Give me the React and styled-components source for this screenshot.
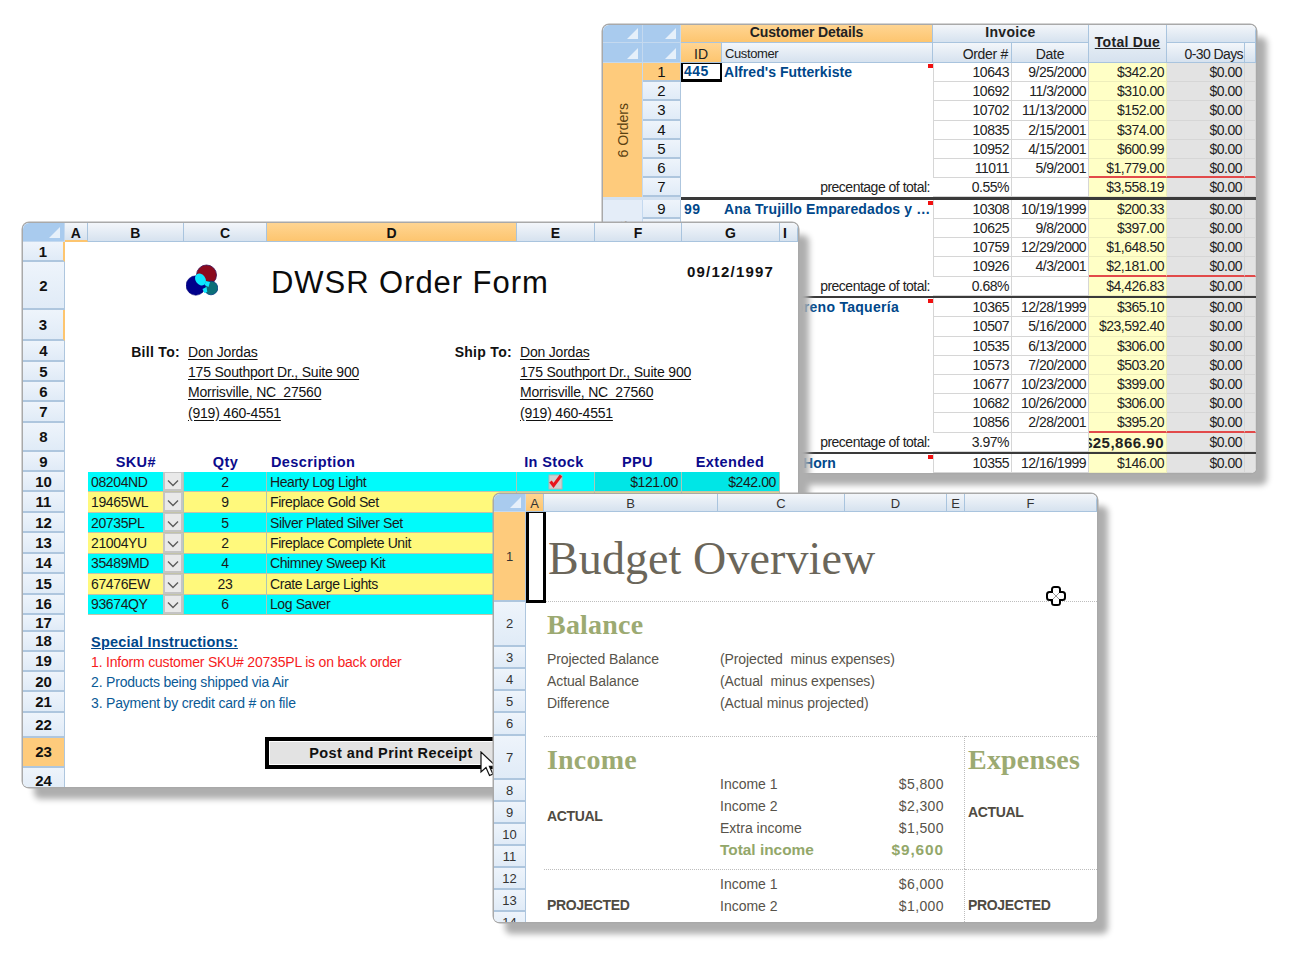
import React from 'react';
import styled, { createGlobalStyle } from 'styled-components';

const GlobalStyle = createGlobalStyle`
  html, body { margin: 0; padding: 0; background: #fff; }
  body { font-family: "Liberation Sans", Arial, sans-serif; color: #111; }
  * { box-sizing: border-box; }
`;

const Desktop = styled.div`
  position: relative;
  width: 1290px;
  height: 957px;
  overflow: hidden;
  background: #fff;
`;

const Window = styled.section`
  position: absolute;
  left: ${p => p.$x}px;
  top: ${p => p.$y}px;
  width: ${p => p.$w}px;
  height: ${p => p.$h}px;
  overflow: hidden;
  background: #fff;
  border-radius: 6px 6px 5px 5px;
`;

/* drawn apart from the window so the content can clip without losing the shadow */
const WindowShadow = styled.div`
  position: absolute;
  left: ${p => p.$x}px;
  top: ${p => p.$y}px;
  width: ${p => p.$w}px;
  height: ${p => p.$h}px;
  border-radius: 6px;
  box-shadow: 0 0 0 1.5px #a9a9a9, 11px 12px 6px 0 #aeaeae;
`;

const headGradient = 'linear-gradient(#f3f6fa, #d6e2ef)';

const Corner = styled.div`
  position: relative;
  background: #a9cbee;
  border-right: 1px solid #c4d9ef;
  border-bottom: 1px solid #c4d9ef;
  grid-row: ${p => p.$r || 'auto'};
  grid-column: ${p => p.$c || 'auto'};
  &::after {
    content: '';
    position: absolute;
    right: 4px;
    bottom: 3px;
    width: 11px;
    height: 11px;
    background: #e6f0fa;
    clip-path: polygon(100% 0, 100% 100%, 0 100%);
  }
`;

const ColHead = styled.div`
  display: flex;
  align-items: center;
  justify-content: ${p => p.$align || 'center'};
  padding: ${p => p.$pt || 0}px ${p => (p.$flush ? 1 : 3)}px ${p => p.$pb || 0}px 3px;
  background: ${p => (p.$active ? 'linear-gradient(#ffd592, #fdc56f)' : headGradient)};
  border-right: 1px solid #a9c4de;
  border-bottom: ${p => (p.$mark ? '2px solid #fdc56f' : '1px solid #a9c4de')};
  font-size: ${p => p.$size || 14}px;
  font-weight: ${p => (p.$bold ? 700 : 400)};
  letter-spacing: ${p => p.$track || 0}px;
  text-decoration: ${p => (p.$under ? 'underline' : 'none')};
  grid-row: ${p => p.$r || 'auto'};
  grid-column: ${p => p.$c || 'auto'};
  white-space: nowrap;
`;

const RowHead = styled.div`
  display: flex;
  align-items: center;
  justify-content: center;
  overflow: hidden;
  background: ${p => (p.$active ? '#fecb7c' : 'linear-gradient(#eef4fb, #e0ebf7)')};
  border-bottom: 2px solid #aec6de;
  border-right: ${p => (p.$mark ? '2px solid #fdc56f' : '1px solid #aec6de')};
  font-size: ${p => p.$size || 15}px;
  font-weight: ${p => (p.$bold ? 700 : 400)};
  letter-spacing: ${p => p.$track || 0}px;
  grid-row: ${p => p.$r || 'auto'};
  grid-column: ${p => p.$c || 'auto'};
`;

/* ---------- Customer details sheet ---------- */

const SHEET_COLS = '40px 38px 41px 211px 79px 77px 78px 78px 11px';

const SheetHeader = styled.header`
  display: grid;
  grid-template-columns: ${SHEET_COLS};
  grid-template-rows: 18px 20px;
  color: #222;
`;

const OrderGroup = styled.div`
  display: grid;
  grid-template-columns: ${SHEET_COLS};
  grid-auto-rows: 19.2px;
`;

const GroupRule = styled.div`
  height: 2.5px;
  margin-left: 78px;
  background: #3a3a3a;
`;

const RuleRow = styled.div`
  background: #d3e1f0;
`;

const OutlineCell = styled.div`
  display: flex;
  align-items: center;
  justify-content: center;
  grid-row: 1 / span ${p => p.$span};
  grid-column: 1;
  background: ${p => (p.$active ? '#fecb7c' : '#e4edf8')};
  color: #5a4212;
  font-size: 14px;
  border-right: 1px solid #c4d9ef;
  span {
    writing-mode: vertical-rl;
    transform: rotate(180deg);
  }
`;

const IdCell = styled.div`
  grid-column: 3;
  padding-left: 3px;
  font-size: 14px;
  font-weight: 700;
  line-height: 19px;
  letter-spacing: 0.5px;
  color: #00478a;
  ${p => p.$selected && 'border: 2px solid #000; border-top-width: 1px; border-bottom-width: 3px; padding-left: 1px; line-height: 15px;'}
`;

const CustomerCell = styled.div`
  position: relative;
  grid-column: 4;
  padding: 0 3px 0 2px;
  white-space: nowrap;
  overflow: hidden;
  font-size: 14px;
  line-height: 19px;
  font-weight: 700;
  letter-spacing: ${p => p.$track || 0.05}px;
  color: #00478a;
`;

const Flag = styled.i`
  position: absolute;
  top: 1px;
  right: 0;
  width: 5px;
  height: 4px;
  background: #f01010;
`;

const NoteCell = styled.div`
  grid-column: 4;
  padding-right: 3px;
  font-size: 14px;
  line-height: 19px;
  letter-spacing: -0.5px;
  text-align: right;
  color: #222;
`;

const toneFill = { plain: '#fff', due: '#ffffc6', aged: '#e3e3e3' };

const NumCell = styled.div`
  display: flex;
  justify-content: flex-end;
  overflow: hidden;
  grid-column: ${p => p.$c};
  padding-right: 2px;
  background: ${p => toneFill[p.$tone || 'plain']};
  border-left: ${p => (p.$lead ? '1px solid #d6d6d6' : 'none')};
  border-right: 1px solid ${p => (p.$tone === 'due' ? '#eeeebb' : '#d6d6d6')};
  border-bottom: ${p => (p.$red ? '2px solid #e24a4a' : `1px solid ${p.$tone === 'due' ? '#eeeebb' : '#d6d6d6'}`)};
  font-size: ${p => (p.$bold ? 15 : 14)}px;
  font-weight: ${p => (p.$bold ? 700 : 400)};
  line-height: 19px;
  letter-spacing: ${p => (p.$bold ? 0.5 : -0.5)}px;
  white-space: nowrap;
  color: #222;
`;

const orderGroups = [
  {
    label: '6 Orders', active: true, id: '445', name: "Alfred's Futterkiste", first: 1,
    orders: [
      ['10643', '9/25/2000', '$342.20'], ['10692', '11/3/2000', '$310.00'], ['10702', '11/13/2000', '$152.00'],
      ['10835', '2/15/2001', '$374.00'], ['10952', '4/15/2001', '$600.99'], ['11011', '5/9/2001', '$1,779.00'],
    ],
    share: '0.55%', total: '$3,558.19',
  },
  {
    label: '4 Orders', id: '99', name: 'Ana Trujillo Emparedados y …', track: 0.15, first: 9,
    orders: [
      ['10308', '10/19/1999', '$200.33'], ['10625', '9/8/2000', '$397.00'],
      ['10759', '12/29/2000', '$1,648.50'], ['10926', '4/3/2001', '$2,181.00'],
    ],
    share: '0.68%', total: '$4,426.83',
  },
  {
    label: '7 Orders', id: '115', name: 'Antonio Moreno Taquería', track: 0.28, first: 15,
    orders: [
      ['10365', '12/28/1999', '$365.10'], ['10507', '5/16/2000', '$23,592.40'], ['10535', '6/13/2000', '$306.00'],
      ['10573', '7/20/2000', '$503.20'], ['10677', '10/23/2000', '$399.00'], ['10682', '10/26/2000', '$306.00'],
      ['10856', '2/28/2001', '$395.20'],
    ],
    share: '3.97%', total: '$25,866.90', boldTotal: true,
  },
  {
    label: '', id: '120', name: 'Around the Horn', first: 24,
    orders: [['10355', '12/16/1999', '$146.00']],
  },
];

function Group({ group }) {
  const rows = group.orders.length + (group.share ? 1 : 0);
  return (
    <OrderGroup>
      <OutlineCell $span={rows} $active={group.active}><span>{group.label}</span></OutlineCell>
      {group.orders.map((order, i) => {
        const red = group.share && i === group.orders.length - 1;
        return (
          <React.Fragment key={order[0]}>
            <RowHead $c="2" $r={i + 1} $active={group.active && i === 0}>{group.first + i}</RowHead>
            {i === 0 ? <IdCell $selected={group.active}>{group.id}</IdCell> : <IdCell />}
            <CustomerCell $track={group.track}>
              {i === 0 && group.name}
              {i === 0 && <Flag />}
            </CustomerCell>
            <NumCell $c="5" $lead>{order[0]}</NumCell>
            <NumCell $c="6">{order[1]}</NumCell>
            <NumCell $c="7" $tone="due" $red={red}>{order[2]}</NumCell>
            <NumCell $c="8" $tone="aged" $red={red}>$0.00</NumCell>
            <NumCell $c="9" $tone="aged" $red={red} />
          </React.Fragment>
        );
      })}
      {group.share && (
        <>
          <RowHead $c="2" $r={rows}>{group.first + rows - 1}</RowHead>
          <NoteCell>precentage of total:</NoteCell>
          <NumCell $c="5">{group.share}</NumCell>
          <NumCell $c="6" />
          <NumCell $c="7" $tone="due" $bold={group.boldTotal}>{group.total}</NumCell>
          <NumCell $c="8" $tone="aged">$0.00</NumCell>
          <NumCell $c="9" $tone="aged" />
        </>
      )}
    </OrderGroup>
  );
}

function CustomerSheet() {
  return (
    <Window $x={603} $y={25} $w={653} $h={448}>
      <SheetHeader>
        <Corner $r="1" $c="1" />
        <Corner $r="1" $c="2" />
        <ColHead $r="1" $c="3 / span 2" $active $bold $pb={3} $track={-0.1}>Customer Details</ColHead>
        <ColHead $r="1" $c="5 / span 2" $bold $pb={3} $track={0.3}>Invoice</ColHead>
        <ColHead $r="1 / span 2" $c="7" $bold $under $pb={3} $track={0.3}>Total Due</ColHead>
        <ColHead $r="1" $c="8 / span 2" />
        <Corner $r="2" $c="1" />
        <Corner $r="2" $c="2" />
        <ColHead $r="2" $c="3" $active $pt={2}>ID</ColHead>
        <ColHead $r="2" $c="4" $pt={2} $align="flex-start" $size={13} $track={-0.4}>Customer</ColHead>
        <ColHead $r="2" $c="5" $pt={2} $align="flex-end" $track={-0.3}>Order #</ColHead>
        <ColHead $r="2" $c="6" $pt={2} $track={-0.3}>Date</ColHead>
        <ColHead $r="2" $c="8" $pt={2} $flush $align="flex-end" $track={-0.6}>0-30 Days</ColHead>
        <ColHead $r="2" $c="9" />
      </SheetHeader>
      {orderGroups.map((group, i) => (
        <React.Fragment key={group.id}>
          {i > 0 && <RuleRow><GroupRule /></RuleRow>}
          <Group group={group} />
        </React.Fragment>
      ))}
    </Window>
  );
}

/* ---------- Order form sheet ---------- */

const FormGrid = styled.div`
  display: grid;
  grid-template-columns: 42px 22.6px 96.4px 83px 250px 78px 87px 98px 18px;
  grid-template-rows: 19px 20px 48px 31px 21px 20px 20px 21px 29px 20px repeat(7, 20.43px) 17px 20px 20px 20.5px 20.5px 25px 30px 28px;
  color: #111;
`;

const Placed = styled.div`
  grid-row: ${p => p.$r};
  grid-column: ${p => p.$c};
  display: flex;
  align-items: center;
  white-space: pre;
  min-width: 0;
`;

const LogoSpot = styled(Placed)`
  padding-left: 2px;
  align-items: flex-start;
  padding-top: 2px;
`;

const FormTitle = styled(Placed)`
  padding: 0 0 6px 4px;
  font-size: 31px;
  letter-spacing: 0.95px;
  color: #0b0b0b;
`;

const FormDate = styled(Placed)`
  align-items: flex-start;
  padding: 1px 0 0 5px;
  font-size: 15px;
  font-weight: 700;
  letter-spacing: 1.2px;
`;

const AddressLabel = styled(Placed)`
  justify-content: flex-end;
  padding-right: ${p => p.$pad || 4}px;
  font-size: 14px;
  font-weight: 700;
  letter-spacing: 0.3px;
`;

const AddressLine = styled(Placed)`
  padding-left: ${p => p.$pad || 4}px;
  font-size: 14px;
  letter-spacing: -0.2px;
  text-decoration: underline;
  text-underline-offset: 2px;
`;

const TableLabel = styled(Placed)`
  justify-content: ${p => p.$align || 'center'};
  padding-left: ${p => p.$pad || 0}px;
  padding-right: ${p => p.$end || 0}px;
  font-size: 14.5px;
  font-weight: 700;
  letter-spacing: 0.4px;
  color: #0b0b8c;
`;

const rowFill = { cyan: '#00fbfb', gold: '#fff97c', deep: '#00e6e6' };

const ProductCell = styled(Placed)`
  justify-content: ${p => p.$align || 'flex-start'};
  padding: ${p => p.$pad || '0 3px'};
  background: ${p => rowFill[p.$tone]};
  border-right: 1px solid #a9c8b8;
  border-bottom: 1px solid #c3c3a8;
  font-size: 14px;
  letter-spacing: -0.4px;
  color: #1a1a1a;
`;

const SkuText = styled.span`
  flex: 1;
  padding-left: 3.5px;
`;

const DropButton = styled.span`
  display: flex;
  align-items: center;
  justify-content: center;
  width: 20px;
  height: 100%;
  padding-top: 3px;
  background: #e9e9e9;
  border: 2px solid #c4c4c4;
  border-top-width: 1px;
  color: #555;
`;

const Instruction = styled(Placed)`
  padding-left: 3.5px;
  font-size: 14px;
  letter-spacing: -0.2px;
  color: ${p => (p.$alert ? '#f61c1c' : '#0a5a96')};
`;

const InstructionTitle = styled(Placed)`
  padding-left: 3.5px;
  font-size: 14.5px;
  font-weight: 700;
  letter-spacing: 0.2px;
  text-decoration: underline;
  color: #00478a;
`;

const PostButton = styled.button`
  grid-row: 24;
  grid-column: 5;
  margin: -1px 0 -1px -2px;
  width: 252px;
  padding: 0;
  background: #e3e3e3;
  border: 4px solid #000;
  outline: 1px solid #fff;
  outline-offset: -5px;
  font-family: inherit;
  font-size: 14.5px;
  font-weight: 700;
  letter-spacing: 0.4px;
  color: #111;
`;

const ArrowPointer = styled.svg`
  position: absolute;
  left: 457px;
  top: 528px;
`;

const formRows = [
  { r: 10, sku: '08204ND', qty: '2', item: 'Hearty Log Light', tone: 'cyan' },
  { r: 11, sku: '19465WL', qty: '9', item: 'Fireplace Gold Set', tone: 'gold' },
  { r: 12, sku: '20735PL', qty: '5', item: 'Silver Plated Silver Set', tone: 'cyan' },
  { r: 13, sku: '21004YU', qty: '2', item: 'Fireplace Complete Unit', tone: 'gold' },
  { r: 14, sku: '35489MD', qty: '4', item: 'Chimney Sweep Kit', tone: 'cyan' },
  { r: 15, sku: '67476EW', qty: '23', item: 'Crate Large Lights', tone: 'gold' },
  { r: 16, sku: '93674QY', qty: '6', item: 'Log Saver', tone: 'cyan' },
];

const billing = ['Don Jordas', '175 Southport Dr., Suite 900', 'Morrisville, NC  27560', '(919) 460-4551'];

function Logo() {
  return (
    <svg width="32" height="34" viewBox="0 0 32 34">
      <circle cx="20.5" cy="11" r="10" fill="#8b0a1e" stroke="#3a0a50" strokeWidth="0.8" />
      <circle cx="25" cy="24" r="6.8" fill="#0b6f78" stroke="#003a80" strokeWidth="0.8" />
      <circle cx="9.8" cy="21.5" r="9.7" fill="#00008b" stroke="#000070" strokeWidth="0.6" />
      <ellipse cx="14.5" cy="15.5" rx="5" ry="6.4" fill="#0ce8ff" transform="rotate(-35 14.5 15.5)" />
      <path d="M20 17l4 1-1.5 5-4-2z" fill="#0ce8ff" />
      <path d="M16.5 25l4-2 .8 5-3 1z" fill="#0ce8ff" />
    </svg>
  );
}

function Chevron() {
  return (
    <svg width="12" height="8" viewBox="0 0 12 8">
      <path d="M1 1.5l5 5 5-5" fill="none" stroke="#5c5c5c" strokeWidth="1.4" />
    </svg>
  );
}

function StockCheck() {
  return (
    <svg width="15" height="16" viewBox="0 0 15 16">
      <rect x="1" y="1" width="13" height="14" fill="#d0d0d0" stroke="#b4b4b4" />
      <path d="M2.5 7.5l3 4L13 1.5" fill="none" stroke="#e8141c" strokeWidth="3" />
    </svg>
  );
}

function OrderForm() {
  const letters = [['A', 2], ['B', 3], ['C', 4], ['D', 5], ['E', 6], ['F', 7], ['G', 8], ['I', 9]];
  return (
    <Window $x={23} $y={223} $w={775} $h={564}>
      <FormGrid>
        <Corner $r="1" $c="1" />
        {letters.map(([name, c]) => (
          <ColHead key={name} $r="1" $c={c} $pt={2} $bold $active={name === 'D'} $mark={name === 'A'} $align={name === 'I' ? 'flex-start' : 'center'}>{name}</ColHead>
        ))}
        {Array.from({ length: 24 }, (_, i) => i + 1).map(n => (
          <RowHead key={n} $r={n + 1} $c="1" $bold $active={n === 23} $mark={n === 1 || n === 3} $size={15}>{n}</RowHead>
        ))}

        <LogoSpot $r="3" $c="4"><Logo /></LogoSpot>
        <FormTitle $r="3" $c="5 / span 2">DWSR Order Form</FormTitle>
        <FormDate $r="3" $c="8 / span 2">09/12/1997</FormDate>

        <AddressLabel $r="5" $c="3">Bill To:</AddressLabel>
        <AddressLabel $r="5" $c="5" $pad={5}>Ship To:</AddressLabel>
        {billing.map((line, i) => (
          <React.Fragment key={line}>
            <AddressLine $r={5 + i} $c="4 / span 2">{line}</AddressLine>
            <AddressLine $r={5 + i} $c="6 / span 3" $pad={3}>{line}</AddressLine>
          </React.Fragment>
        ))}

        <TableLabel $r="10" $c="3">SKU#</TableLabel>
        <TableLabel $r="10" $c="4">Qty</TableLabel>
        <TableLabel $r="10" $c="5" $align="flex-start" $pad={4}>Description</TableLabel>
        <TableLabel $r="10" $c="6" $end={4}>In Stock</TableLabel>
        <TableLabel $r="10" $c="7" $end={2}>PPU</TableLabel>
        <TableLabel $r="10" $c="8" $end={2}>Extended</TableLabel>

        {formRows.map(row => (
          <React.Fragment key={row.sku}>
            <ProductCell $r={row.r + 1} $c="3" $tone={row.tone} $pad="0"><SkuText>{row.sku}</SkuText><DropButton><Chevron /></DropButton></ProductCell>
            <ProductCell $r={row.r + 1} $c="4" $tone={row.tone} $align="center">{row.qty}</ProductCell>
            <ProductCell $r={row.r + 1} $c="5" $tone={row.tone}>{row.item}</ProductCell>
            <ProductCell $r={row.r + 1} $c="6" $tone={row.tone} $align="center">{row.r === 10 && <StockCheck />}</ProductCell>
            <ProductCell $r={row.r + 1} $c="7" $tone={row.r === 10 ? 'deep' : row.tone} $align="flex-end">{row.r === 10 && '$121.00'}</ProductCell>
            <ProductCell $r={row.r + 1} $c="8" $tone={row.r === 10 ? 'deep' : row.tone} $align="flex-end">{row.r === 10 && '$242.00'}</ProductCell>
          </React.Fragment>
        ))}

        <InstructionTitle $r="19" $c="3 / span 5">Special Instructions:</InstructionTitle>
        <Instruction $r="20" $c="3 / span 5" $alert>1. Inform customer SKU# 20735PL is on back order</Instruction>
        <Instruction $r="21" $c="3 / span 5">2. Products being shipped via Air</Instruction>
        <Instruction $r="22" $c="3 / span 5">3. Payment by credit card # on file</Instruction>

        <PostButton type="button">Post and Print Receipt</PostButton>
      </FormGrid>
      <ArrowPointer width="17" height="26" viewBox="0 0 17 26">
        <path d="M1 1v20l5-4.5 3.5 8 3.4-1.4-3.5-7.8H16z" fill="#fff" stroke="#111" strokeWidth="1.2" />
      </ArrowPointer>
    </Window>
  );
}

/* ---------- Budget overview sheet ---------- */

const BudgetFrame = styled.div`
  display: grid;
  grid-template-columns: 32px 1fr;
  grid-template-rows: 18px 1fr;
`;

const BudgetHeader = styled.header`
  grid-column: 1 / -1;
  display: grid;
  grid-template-columns: 32px 18px 174px 127px 102px 18px 132px;
  color: #333;
`;

const BudgetRowHeads = styled.div`
  display: grid;
  grid-template-rows: 90px 45px 22px 22px 22px 23px 44px repeat(7, 22px);
  color: #333;
`;

const BudgetBody = styled.div`
  min-width: 0;
  color: #57534a;
`;

const TitleBand = styled.div`
  display: flex;
  height: 90px;
  border-bottom: 1px dotted #bdbdbd;
`;

const SelectedCell = styled.div`
  flex: none;
  width: 20px;
  height: 91px;
  border: 3px solid #000;
  border-top-width: 1px;
  background: #fff;
`;

const BudgetTitle = styled.h1`
  margin: 0;
  padding: 4px 0 0 2px;
  align-self: center;
  font-family: "Liberation Serif", serif;
  font-size: 46px;
  font-weight: 400;
  letter-spacing: 0.1px;
  color: #6b665a;
`;

const SectionHead = styled.h2`
  margin: 0;
  height: ${p => p.$h}px;
  padding-left: ${p => p.$pad || 0}px;
  padding-top: ${p => p.$top || 0}px;
  display: flex;
  align-items: center;
  font-family: "Liberation Serif", serif;
  font-size: 28px;
  font-weight: 700;
  letter-spacing: 0.2px;
  color: #9caa72;
`;

const NoteGrid = styled.div`
  display: grid;
  grid-template-columns: 173px 1fr;
  grid-auto-rows: 22px;
  align-items: center;
  height: 89px;
  margin-left: 21px;
  padding-top: 1px;
  font-size: 14px;
  letter-spacing: -0.1px;
  white-space: pre;
`;

const FinanceBoard = styled.div`
  display: grid;
  grid-template-columns: 421px 1fr;
  grid-template-rows: 133px 53px;
  margin-left: 18px;
`;

const FinancePane = styled.div`
  border-top: 1px dotted #bdbdbd;
  border-right: ${p => (p.$edge ? '1px dotted #bdbdbd' : 'none')};
  padding-left: 3px;
  padding-top: ${p => p.$top || 0}px;
`;

const LedgerGrid = styled.div`
  display: grid;
  grid-template-columns: 173px 1fr auto;
  grid-auto-rows: 22px;
  align-items: center;
  padding-right: 20px;
  font-size: 14px;
`;

const LedgerTag = styled.div`
  grid-column: 1;
  grid-row: ${p => p.$r};
  font-size: 14px;
  font-weight: 700;
  letter-spacing: -0.35px;
  color: #4f4b42;
  margin-top: ${p => p.$shift || 0}px;
`;

const LedgerText = styled.div`
  grid-column: ${p => p.$c};
  font-size: ${p => (p.$total ? 15.4 : 14)}px;
  font-weight: ${p => (p.$total ? 700 : 400)};
  color: ${p => (p.$total ? '#93a76a' : 'inherit')};
  letter-spacing: ${p => (p.$money ? (p.$total ? 0.9 : 0.4) : 0)}px;
  text-align: ${p => (p.$money ? 'right' : 'left')};
`;

const MoveCursor = styled.svg`
  position: absolute;
  left: 552px;
  top: 92px;
`;

const incomeLines = [['Income 1', '$5,800'], ['Income 2', '$2,300'], ['Extra income', '$1,500']];
const projectedLines = [['Income 1', '$6,000'], ['Income 2', '$1,000']];

function LedgerLine({ label, amount, total }) {
  return (
    <>
      <LedgerText $c="2" $total={total}>{label}</LedgerText>
      <LedgerText $c="3" $money $total={total}>{amount}</LedgerText>
    </>
  );
}

function BudgetSheet() {
  const rows = Array.from({ length: 14 }, (_, i) => i + 1);
  return (
    <Window $x={494} $y={494} $w={603} $h={428}>
      <BudgetFrame>
        <BudgetHeader>
          <Corner />
          <ColHead $size={13} $pt={2} $active>A</ColHead>
          <ColHead $size={13} $pt={2}>B</ColHead>
          <ColHead $size={13} $pt={2}>C</ColHead>
          <ColHead $size={13} $pt={2}>D</ColHead>
          <ColHead $size={13} $pt={2}>E</ColHead>
          <ColHead $size={13} $pt={2}>F</ColHead>
        </BudgetHeader>
        <BudgetRowHeads>
          {rows.map(n => <RowHead key={n} $size={13} $active={n === 1}>{n}</RowHead>)}
        </BudgetRowHeads>
        <BudgetBody>
          <TitleBand>
            <SelectedCell />
            <BudgetTitle>Budget Overview</BudgetTitle>
          </TitleBand>
          <SectionHead $h={45} $pad={21}>Balance</SectionHead>
          <NoteGrid>
            <span>Projected Balance</span><span>(Projected  minus expenses)</span>
            <span>Actual Balance</span><span>(Actual  minus expenses)</span>
            <span>Difference</span><span>(Actual minus projected)</span>
          </NoteGrid>
          <FinanceBoard>
            <FinancePane $edge>
              <SectionHead $h={36} $top={10}>Income</SectionHead>
              <LedgerGrid>
                <LedgerTag $r="1 / span 4" $shift={-2}>ACTUAL</LedgerTag>
                {incomeLines.map(([label, amount]) => <LedgerLine key={label} label={label} amount={amount} />)}
                <LedgerLine label="Total income" amount="$9,600" total />
              </LedgerGrid>
            </FinancePane>
            <FinancePane>
              <SectionHead $h={36} $top={10}>Expenses</SectionHead>
              <LedgerGrid>
                <LedgerTag $r="1 / span 4" $shift={-10}>ACTUAL</LedgerTag>
                <LedgerText $c="2" />
                <LedgerText $c="2" />
                <LedgerText $c="2" />
                <LedgerText $c="2" />
              </LedgerGrid>
            </FinancePane>
            <FinancePane $edge $top={3}>
              <LedgerGrid>
                <LedgerTag $r="2" $shift={-2}>PROJECTED</LedgerTag>
                {projectedLines.map(([label, amount]) => <LedgerLine key={label} label={label} amount={amount} />)}
              </LedgerGrid>
            </FinancePane>
            <FinancePane $top={3}>
              <LedgerGrid>
                <LedgerTag $r="2" $shift={-2}>PROJECTED</LedgerTag>
              </LedgerGrid>
            </FinancePane>
          </FinanceBoard>
        </BudgetBody>
      </BudgetFrame>
      <MoveCursor width="20" height="20" viewBox="0 0 20 20">
        <rect x="6" y="1" width="8" height="18" rx="2.5" fill="#fff" stroke="#000" strokeWidth="2" />
        <rect x="1" y="6" width="18" height="8" rx="2.5" fill="#fff" stroke="#000" strokeWidth="2" />
        <rect x="7" y="2" width="6" height="16" rx="1.5" fill="#fff" />
        <path d="M7 7l6 6M13 7l-6 6" stroke="#999" strokeWidth="1" />
      </MoveCursor>
    </Window>
  );
}

export default function App() {
  return (
    <Desktop>
      <GlobalStyle />
      <WindowShadow $x={603} $y={25} $w={653} $h={448} />
      <CustomerSheet />
      <WindowShadow $x={23} $y={223} $w={775} $h={564} />
      <OrderForm />
      <WindowShadow $x={494} $y={494} $w={603} $h={428} />
      <BudgetSheet />
    </Desktop>
  );
}
